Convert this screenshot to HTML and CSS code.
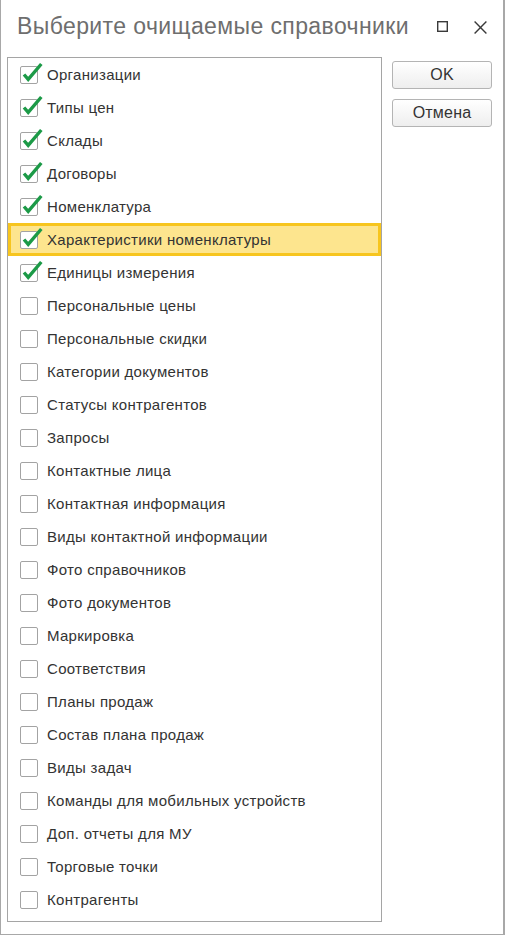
FILE: index.html
```html
<!DOCTYPE html>
<html lang="ru">
<head>
<meta charset="utf-8">
<title>Выберите очищаемые справочники</title>
<link rel="stylesheet" href="styles.css">
</head>
<body>
<div class="window">
  <div class="header">
    <div class="title">Выберите очищаемые справочники</div>
    <div class="controls">
      <svg class="ctl-max" width="11" height="11" viewBox="0 0 11 11"><rect x="0.7" y="0.7" width="9.6" height="9.6" fill="none" stroke="#3a3a3a" stroke-width="1.4"/></svg>
      <svg class="ctl-close" width="13" height="13" viewBox="0 0 13 13"><path d="M0.6 0.6 L12.4 12.4 M12.4 0.6 L0.6 12.4" stroke="#3a3a3a" stroke-width="1.4" fill="none"/></svg>
    </div>
  </div>
  <div class="body">
    <div class="list">
      <div class="row"><span class="cb on"></span><span class="label">Организации</span></div>
      <div class="row"><span class="cb on"></span><span class="label">Типы цен</span></div>
      <div class="row"><span class="cb on"></span><span class="label">Склады</span></div>
      <div class="row"><span class="cb on"></span><span class="label">Договоры</span></div>
      <div class="row"><span class="cb on"></span><span class="label">Номенклатура</span></div>
      <div class="row current"><span class="cb on"></span><span class="label">Характеристики номенклатуры</span></div>
      <div class="row"><span class="cb on"></span><span class="label">Единицы измерения</span></div>
      <div class="row"><span class="cb"></span><span class="label">Персональные цены</span></div>
      <div class="row"><span class="cb"></span><span class="label">Персональные скидки</span></div>
      <div class="row"><span class="cb"></span><span class="label">Категории документов</span></div>
      <div class="row"><span class="cb"></span><span class="label">Статусы контрагентов</span></div>
      <div class="row"><span class="cb"></span><span class="label">Запросы</span></div>
      <div class="row"><span class="cb"></span><span class="label">Контактные лица</span></div>
      <div class="row"><span class="cb"></span><span class="label">Контактная информация</span></div>
      <div class="row"><span class="cb"></span><span class="label">Виды контактной информации</span></div>
      <div class="row"><span class="cb"></span><span class="label">Фото справочников</span></div>
      <div class="row"><span class="cb"></span><span class="label">Фото документов</span></div>
      <div class="row"><span class="cb"></span><span class="label">Маркировка</span></div>
      <div class="row"><span class="cb"></span><span class="label">Соответствия</span></div>
      <div class="row"><span class="cb"></span><span class="label">Планы продаж</span></div>
      <div class="row"><span class="cb"></span><span class="label">Состав плана продаж</span></div>
      <div class="row"><span class="cb"></span><span class="label">Виды задач</span></div>
      <div class="row"><span class="cb"></span><span class="label">Команды для мобильных устройств</span></div>
      <div class="row"><span class="cb"></span><span class="label">Доп. отчеты для МУ</span></div>
      <div class="row"><span class="cb"></span><span class="label">Торговые точки</span></div>
      <div class="row"><span class="cb"></span><span class="label">Контрагенты</span></div>
    </div>
    <div class="buttons">
      <button class="btn" type="button">OK</button>
      <button class="btn" type="button">Отмена</button>
    </div>
  </div>
</div>
<script>
document.querySelectorAll('.cb.on').forEach(function (el) {
  el.innerHTML = '<svg class="tick" width="22" height="22" viewBox="0 0 22 22"><path d="M3 12.5 L7.2 17.3 L20.3 2" fill="none" stroke="#1c9a47" stroke-width="3.4" stroke-linejoin="miter" stroke-linecap="butt"/></svg>';
});
</script>
</body>
</html>
```

FILE: styles.css
```css
* { box-sizing: border-box; }
html, body {
  margin: 0;
  padding: 0;
  background: #ffffff;
}
body {
  font-family: "Liberation Sans", Arial, sans-serif;
  color: #333333;
}
.window {
  width: 505px;
  height: 935px;
  border-left: 1px solid #a8a8a8;
  border-right: 2px solid #a8a8a8;
  border-bottom: 1px solid #a8a8a8;
  background: #ffffff;
  display: flex;
  flex-direction: column;
}
.header {
  height: 57px;
  display: flex;
  align-items: flex-start;
  padding-top: 13px;
}
.title {
  flex: 1;
  padding-left: 16px;
  font-size: 23px;
  line-height: 26px;
  letter-spacing: 0.4px;
  color: #6e6e6e;
  white-space: nowrap;
}
.controls {
  display: flex;
  align-items: flex-start;
  padding-top: 8px;
  padding-right: 16px;
}
.ctl-close { margin-left: 26px; }
.body {
  display: flex;
  align-items: flex-start;
}
.list {
  margin-left: 6px;
  width: 375px;
  border: 1px solid #a5a5a5;
  padding-bottom: 5px;
}
.row {
  height: 33px;
  display: flex;
  align-items: center;
  padding-left: 12px;
  font-size: 15px;
  letter-spacing: 0.3px;
  white-space: nowrap;
}
.row.current {
  background: #fde58e;
  border: 3px solid #f7c51e;
  padding-left: 9px;
}
.cb {
  position: relative;
  width: 18px;
  height: 18px;
  border: 1px solid #a3a3a3;
  border-radius: 2px;
  background: #ffffff;
  flex: none;
}
.tick {
  position: absolute;
  left: 0;
  top: -5px;
}
.label {
  margin-left: 9px;
  color: #333333;
}
.buttons {
  margin-left: 10px;
  margin-top: 4px;
  display: flex;
  flex-direction: column;
  gap: 10px;
}
.btn {
  width: 100px;
  height: 28px;
  border: 1px solid #b4b4b4;
  border-radius: 3px;
  background: linear-gradient(#ffffff, #eeeeee);
  font-family: "Liberation Sans", Arial, sans-serif;
  font-size: 16px;
  letter-spacing: 0.2px;
  color: #333333;
  padding: 0;
}
```
